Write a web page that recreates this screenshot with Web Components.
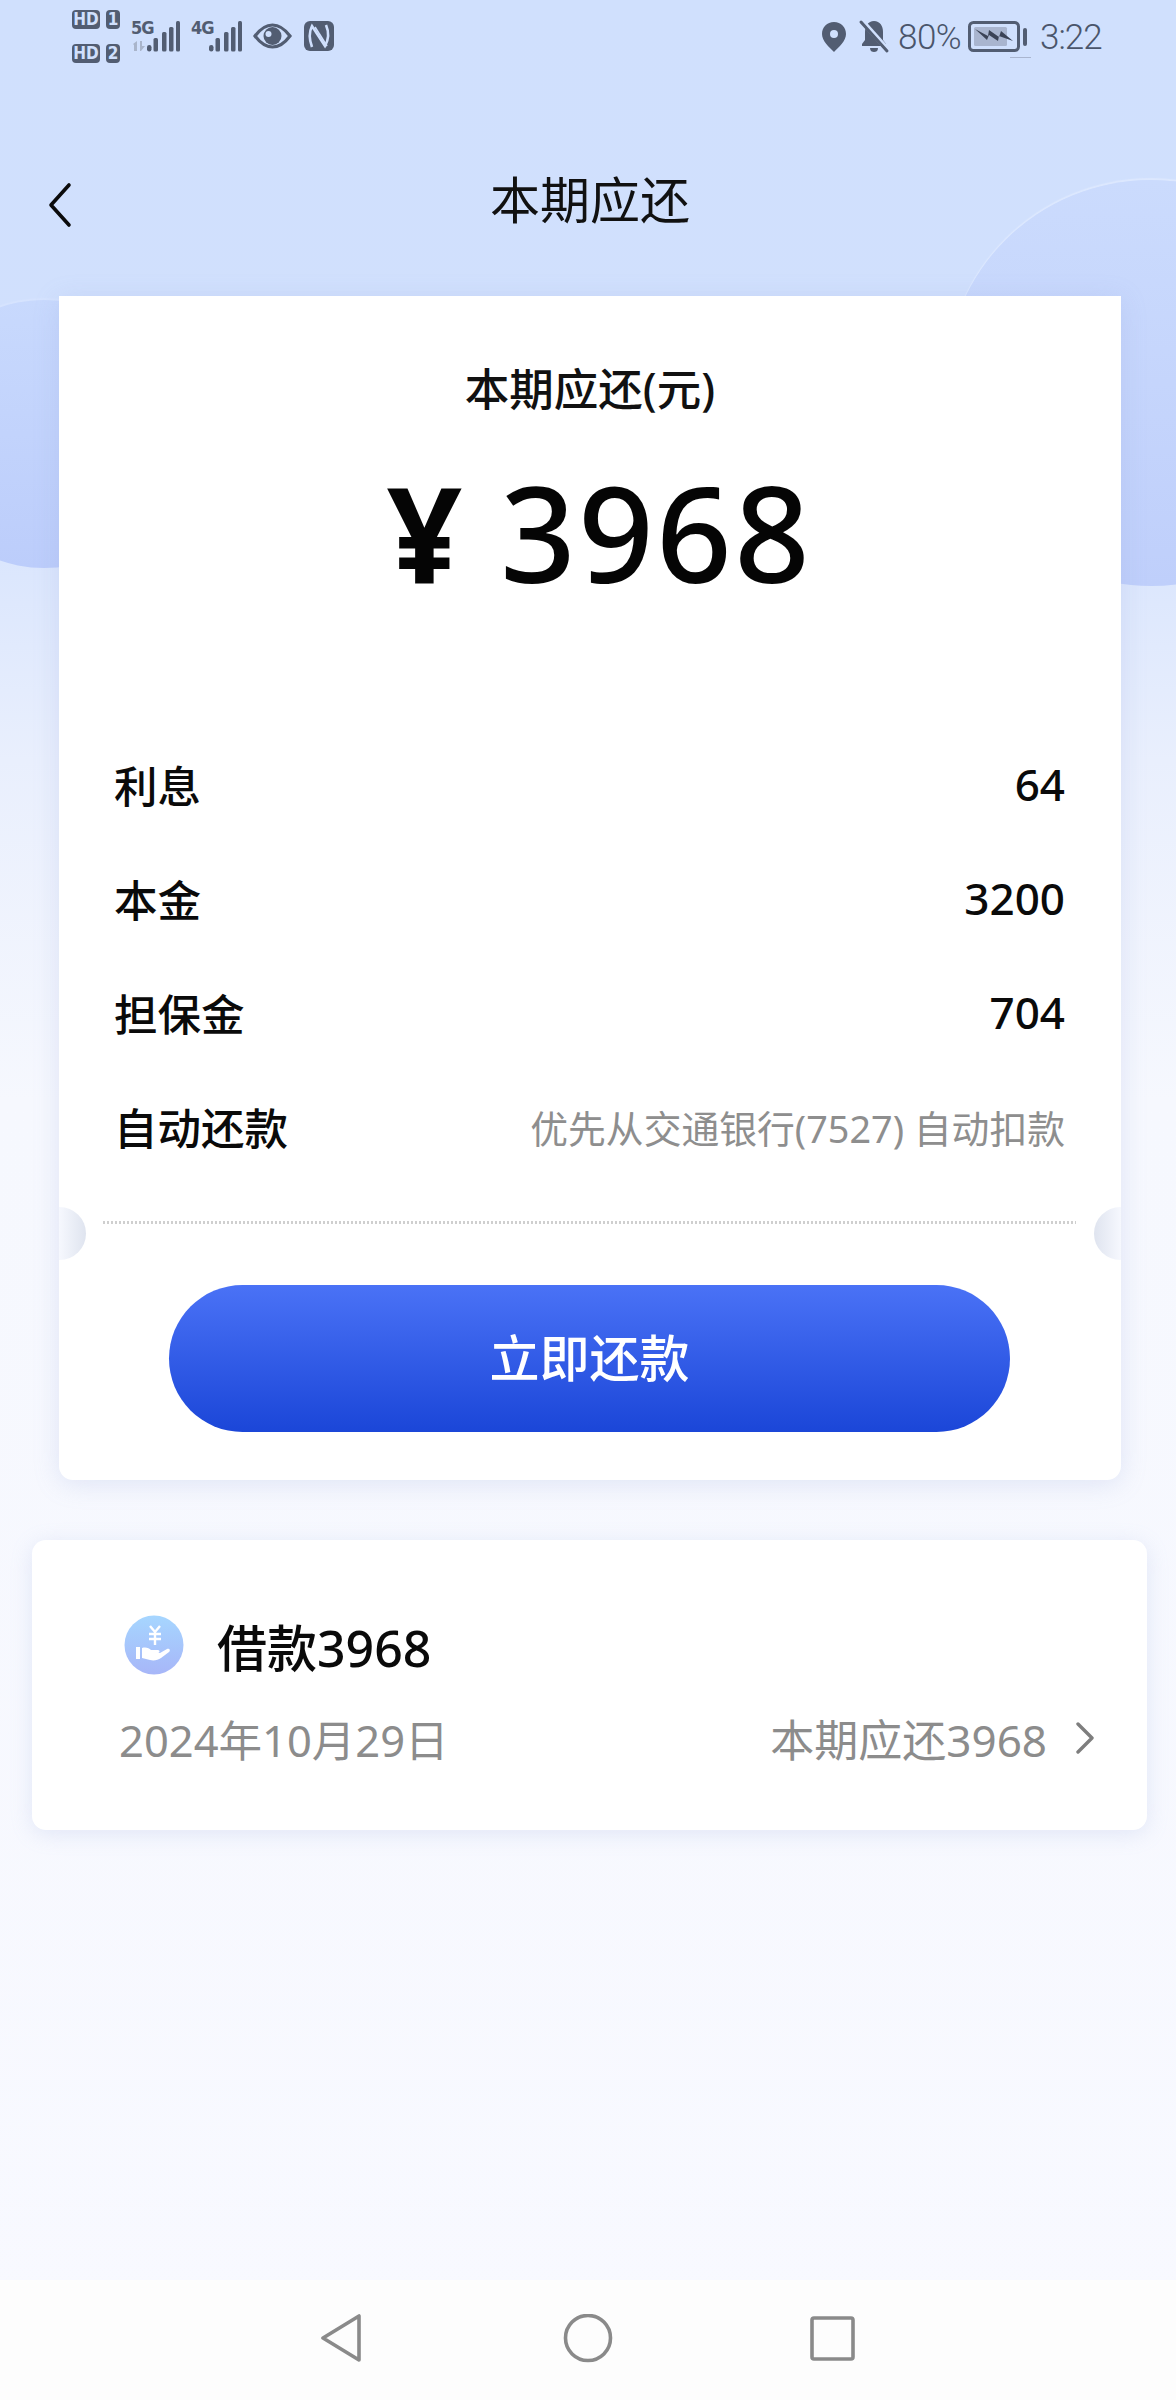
<!DOCTYPE html>
<html lang="zh">
<head>
<meta charset="utf-8">
<title>本期应还</title>
<style>
  html, body { margin: 0; padding: 0; }
  body {
    font-family: "Noto Sans", "Noto Sans CJK SC", sans-serif;
    background: #f8f9ff;
  }
</style>
</head>
<body>
<repay-screen>
  <status-bar></status-bar>
  <nav-header>本期应还</nav-header>
  <bill-card label="本期应还(元)" currency="¥" amount="3968" action="立即还款">
    <bill-row name="利息">64</bill-row>
    <bill-row name="本金">3200</bill-row>
    <bill-row name="担保金">704</bill-row>
    <bill-row name="自动还款" muted>优先从交通银行(7527) 自动扣款</bill-row>
  </bill-card>
  <loan-card title="借款3968" date="2024年10月29日" due="本期应还3968"></loan-card>
  <system-nav></system-nav>
</repay-screen>

<script>
class RepayScreen extends HTMLElement {
  constructor() {
    super();
    this.attachShadow({ mode: "open" });
    this.shadowRoot.innerHTML = `
    <style>
      :host {
        display: flex;
        flex-direction: column;
        position: relative;
        height: 2400px;
        overflow: hidden;
        background: linear-gradient(180deg, #d0e0fd 0, #d1e0fd 420px, #e9effd 760px, #f6f8fe 1100px, #f8f9ff 2400px);
      }
      .blob { position: absolute; border-radius: 50%; }
      .right {
        left: 946px; top: 180px; width: 410px; height: 406px;
        background: linear-gradient(180deg, #cbdbfd 0, #bfcffb 100%);
        box-shadow: 0 -2px 1px #dde8fe;
      }
      .left {
        left: -90px; top: 300px; width: 268px; height: 268px;
        background: linear-gradient(180deg, #c8d9fd 0, #bccdfb 100%);
        box-shadow: 0 -2px 1px #d6e3fe;
      }
      ::slotted(*) { position: relative; }
    </style>
    <div class="blob right"></div>
    <div class="blob left"></div>
    <slot></slot>`;
  }
}

class StatusBar extends HTMLElement {
  constructor() {
    super();
    this.attachShadow({ mode: "open" });
    this.shadowRoot.innerHTML = `
    <style>
      :host {
        display: flex;
        justify-content: space-between;
        box-sizing: border-box;
        height: 80px;
        padding: 10px 72px 0 72px;
        color: #525d72;
      }
      .group { display: flex; align-items: flex-start; }
      .sims { display: flex; flex-direction: column; gap: 15px; width: 59px; }
      .sim { display: flex; gap: 6px; }
      .tag {
        background: #525d72;
        color: #d0e0fd;
        border-radius: 4px;
        height: 19px;
        font: 700 17px/19px "DejaVu Sans Condensed", "Liberation Sans", sans-serif;
        text-align: center;
      }
      .tag.hd { width: 28px; }
      .tag.no { width: 14px; }
      .net { position: relative; width: 49px; height: 31px; margin-top: 11px; }
      .net b {
        position: absolute; left: 0; top: -2px;
        font: 700 18px/18px "DejaVu Sans Condensed", "Liberation Sans", sans-serif;
        letter-spacing: -1px;
      }
      svg { display: block; overflow: visible; }
      .text { font: 300 35px/36px Roboto, "Noto Sans", sans-serif; color: #4a556b; white-space: nowrap; margin-top: 10px; }
      .pct { width: 62px; margin-left: 9px; letter-spacing: -.5px; }
      .time { width: 64px; margin-left: 12px; letter-spacing: -1px; }
    </style>
    <div class="group">
      <div class="sims">
        <div class="sim"><span class="tag hd">HD</span><span class="tag no">1</span></div>
        <div class="sim"><span class="tag hd">HD</span><span class="tag no">2</span></div>
      </div>
      <div class="net">
        <b>5G</b>
        <svg width="49" height="31" viewBox="0 0 49 31" fill="#525d72">
          <path d="M2 23l4-3v10h-3v-6zM9 20h2v5l3 0-4 5h-1z" fill="#a9b5cb"/>
          <rect x="16" y="24" width="4.500" height="6.500" rx="2.200"/>
          <rect x="22.500" y="17" width="4.500" height="13.500" rx="1.500"/>
          <rect x="31" y="11" width="4.500" height="19.500" rx="1.500"/>
          <rect x="38" y="6" width="4.500" height="24.500" rx="1.500"/>
          <rect x="45" y="0" width="4" height="30.500" rx="1.500"/>
        </svg>
      </div>
      <div class="net" style="width:50px;margin-left:11px">
        <b>4G</b>
        <svg width="50" height="31" viewBox="0 0 50 31" fill="#525d72">
          <rect x="18" y="24" width="4.500" height="6.500" rx="2.200"/>
          <rect x="24.500" y="17" width="4.500" height="13.500" rx="1.500"/>
          <rect x="33" y="11" width="4.500" height="19.500" rx="1.500"/>
          <rect x="40" y="6" width="4.500" height="24.500" rx="1.500"/>
          <rect x="47" y="0" width="4" height="30.500" rx="1.500"/>
        </svg>
      </div>
      <svg style="margin:13px 0 0 12px" width="39" height="26" viewBox="0 0 39 26">
        <path d="M2 13C8 5 13 2 19.500 2S31 5 37 13C31 21 26 24 19.500 24S8 21 2 13Z" fill="none" stroke="#525d72" stroke-width="3.200"/>
        <circle cx="19.500" cy="13" r="9" fill="#525d72"/>
        <circle cx="15.500" cy="11" r="3" fill="#d0e0fd"/>
      </svg>
      <svg style="margin:11px 0 0 12px" width="30" height="30" viewBox="0 0 30 30">
        <rect width="30" height="30" rx="6" fill="#525d72"/>
        <path d="M8 26C5 18 5 11 8 5L21 25C25 18 25 11 22 4" fill="none" stroke="#d0e0fd" stroke-width="2.600"/>
        <path d="M11 6L23 25" fill="none" stroke="#d0e0fd" stroke-width="1.600"/>
      </svg>
    </div>
    <div class="group">
      <svg style="margin-top:11px" width="26" height="32" viewBox="0 0 26 32">
        <path d="M13 1C6 1 1 6 1 13c0 7 7 13 12 18 5-5 12-11 12-18C25 6 20 1 13 1Z" fill="#525d72"/>
        <circle cx="13" cy="13" r="4" fill="#d0e0fd"/>
      </svg>
      <svg style="margin:10px 0 0 12px" width="30" height="33" viewBox="0 0 30 33">
        <path d="M15 1c6 0 9 5 9 11v8l3 4v2H3v-2l3-4v-8c0-6 3-11 9-11Z" fill="#525d72"/>
        <path d="M11 28h8c0 3-2 4-4 4s-4-1-4-4Z" fill="#525d72"/>
        <path d="M3 1l26 29" stroke="#d0e0fd" stroke-width="5"/>
        <path d="M2 2l26 29" stroke="#525d72" stroke-width="3" stroke-linecap="round"/>
      </svg>
      <span class="text pct">80%</span>
      <svg style="margin:11px 0 0 8px" width="60" height="37" viewBox="0 0 60 37">
        <rect x="1.500" y="1.500" width="49" height="28" rx="4" fill="none" stroke="#525d72" stroke-width="3"/>
        <rect x="6" y="6" width="33" height="19" rx="1.500" fill="#a9b5cf"/>
        <path d="M7 8L20 15L21 9L31 16L33 10L45 20L31 15L30 20L21 14L19 19Z" fill="#3b4356"/>
        <rect x="55" y="7" width="4" height="18" rx="2" fill="#525d72"/>
        <rect x="42" y="36" width="21" height="1" fill="#a9b5cf"/>
      </svg>
      <span class="text time">3:22</span>
    </div>`;
  }
}

class NavHeader extends HTMLElement {
  constructor() {
    super();
    this.attachShadow({ mode: "open" });
    this.shadowRoot.innerHTML = `
    <style>
      :host {
        display: grid;
        grid-template-columns: 132px 1fr 132px;
        align-items: center;
        height: 216px;
        box-sizing: border-box;
        padding: 80px 0 56px 0;
        color: #111;
      }
      svg { display: block; margin: 9px 0 0 48px; }
      .title { text-align: center; font-size: 50px; line-height: 80px; padding-left: 4px; }
    </style>
    <svg width="26" height="46" viewBox="0 0 26 46">
      <path d="M21 3L3 23l18 20" fill="none" stroke="#0b0b0b" stroke-width="3.600" stroke-linecap="round" stroke-linejoin="round"/>
    </svg>
    <div class="title"><slot></slot></div>
    <div></div>`;
  }
}

class BillRow extends HTMLElement {
  constructor() {
    super();
    this.attachShadow({ mode: "open" });
    this.shadowRoot.innerHTML = `
    <style>
      :host {
        display: flex;
        justify-content: space-between;
        align-items: center;
        height: 114px;
        margin-left: -1px;
        font-size: 43.500px;
        font-weight: 500;
        color: #0a0a0a;
      }
      .value { font-size: 44px; }
      :host([muted]) .value { font-size: 37.800px; font-weight: 400; color: #8e8e8e; }
    </style>
    <span class="name"></span>
    <span class="value"><slot></slot></span>`;
    this.shadowRoot.querySelector(".name").textContent = this.getAttribute("name");
  }
}

class BillCard extends HTMLElement {
  constructor() {
    super();
    this.attachShadow({ mode: "open" });
    this.shadowRoot.innerHTML = `
    <style>
      :host {
        display: block;
        position: relative;
        box-sizing: border-box;
        height: 1184px;
        margin: 0 55px 0 59px;
        padding-top: 63px;
        background: #fff;
        border-radius: 0 0 14px 14px;
        box-shadow: 0 4px 26px rgba(140, 160, 215, .22);
        text-align: center;
      }
      .label { font-size: 44.500px; line-height: 60px; font-weight: 500; color: #111; }
      .amount { font-size: 132px; line-height: 170px; font-weight: 500; color: #050505; margin-top: 28px; letter-spacing: 2.500px; padding-left: 19px; }
      .currency { font-weight: 700; margin-right: 38px; letter-spacing: 0; }
      .rows { margin: 110px 56px 0 56px; text-align: left; }
      .dash {
        margin: 38px 45px 0 44px;
        height: 3px;
        background: repeating-linear-gradient(90deg, #cfcfcf 0 2px, transparent 2px 4px);
      }
      .pay {
        display: block;
        box-sizing: border-box;
        width: 841px;
        height: 147px;
        margin: 61px auto 0 110px;
        border-radius: 74px;
        background: linear-gradient(180deg, #4a72f6 0, #1b46d8 100%);
        color: #fff;
        font-size: 50px;
        font-weight: 500;
        line-height: 147px;
        text-align: center;
      }
      .notch {
        position: absolute;
        top: 911px;
        width: 27px;
        height: 53px;
      }
      .notch.l { left: 0; border-radius: 0 27px 27px 0; background: linear-gradient(90deg, #f6f8fe, #dfe4ef); }
      .notch.r { right: 0; border-radius: 27px 0 0 27px; background: linear-gradient(270deg, #f6f8fe, #dfe4ef); }
    </style>
    <div class="label"></div>
    <div class="amount"><span class="currency"></span><span class="digits"></span></div>
    <div class="rows"><slot></slot></div>
    <div class="dash"></div>
    <div class="pay"></div>
    <div class="notch l"></div>
    <div class="notch r"></div>`;
    this.shadowRoot.querySelector(".label").textContent = this.getAttribute("label");
    this.shadowRoot.querySelector(".currency").textContent = this.getAttribute("currency");
    this.shadowRoot.querySelector(".digits").textContent = this.getAttribute("amount");
    this.shadowRoot.querySelector(".pay").textContent = this.getAttribute("action");
  }
}

class LoanCard extends HTMLElement {
  constructor() {
    super();
    this.attachShadow({ mode: "open" });
    this.shadowRoot.innerHTML = `
    <style>
      :host {
        display: block;
        box-sizing: border-box;
        height: 290px;
        margin: 60px 29px 0 32px;
        padding: 70px 52px 0 87px;
        background: #fff;
        border-radius: 14px;
        box-shadow: 0 4px 22px rgba(140, 160, 215, .2);
      }
      .top { display: flex; align-items: center; height: 70px; gap: 33px; padding-left: 5px; }
      .title { font-size: 50px; font-weight: 500; color: #0a0a0a; }
      .bottom { display: flex; justify-content: space-between; align-items: center; margin-top: 26px; font-size: 44px; color: #8c8c8c; }
      .date { font-size: 43.500px; }
      .due { display: flex; align-items: center; gap: 28px; }
      svg { display: block; }
    </style>
    <div class="top">
      <svg width="60" height="60" viewBox="0 0 60 60">
        <defs><linearGradient id="g" x1="0" y1="0" x2="0" y2="1">
          <stop offset="0" stop-color="#a6d6ff"/><stop offset="1" stop-color="#a7b6f8"/>
        </linearGradient></defs>
        <circle cx="30" cy="30" r="29.500" fill="url(#g)"/>
        <path d="M26 11l5 6 5-6M25 19h12M25 24h12M31 17v13" fill="none" stroke="#fff" stroke-width="2.400"/>
        <path d="M12 32h4v12h-4zM18 33c4-1 7 0 9 2h7c2 0 2 3 0 3h-6 8l7-4c2-1 4 1 2 3l-8 6c-3 2-7 3-11 2l-8-2Z" fill="#fff"/>
      </svg>
      <span class="title"></span>
    </div>
    <div class="bottom">
      <span class="date"></span>
      <span class="due">
        <span class="due-text"></span>
        <svg width="20" height="32" viewBox="0 0 20 32">
          <path d="M3 2l14 14L3 30" fill="none" stroke="#7e7e7e" stroke-width="3.400" stroke-linecap="round" stroke-linejoin="round"/>
        </svg>
      </span>
    </div>`;
    this.shadowRoot.querySelector(".title").textContent = this.getAttribute("title");
    this.shadowRoot.querySelector(".date").textContent = this.getAttribute("date");
    this.shadowRoot.querySelector(".due-text").textContent = this.getAttribute("due");
  }
}

class SystemNav extends HTMLElement {
  constructor() {
    super();
    this.attachShadow({ mode: "open" });
    this.shadowRoot.innerHTML = `
    <style>
      :host {
        display: flex;
        align-items: flex-start;
        margin-top: auto;
        height: 120px;
        box-sizing: border-box;
        padding: 34px 0 0 320px;
        background: #fdfdfd;
      }
      svg { display: block; fill: none; stroke: #8a8a8a; stroke-width: 3.600; stroke-linejoin: round; }
    </style>
    <svg width="42" height="48" viewBox="0 0 42 48"><path d="M3 24L39 2v44Z"/></svg>
    <svg style="margin-left:201px" width="50" height="50" viewBox="0 0 50 50"><circle cx="25" cy="24" r="22.500"/></svg>
    <svg style="margin:2px 0 0 197px" width="46" height="46" viewBox="0 0 46 46"><rect x="2" y="2" width="41" height="41" rx="2"/></svg>`;
  }
}

customElements.define("repay-screen", RepayScreen);
customElements.define("status-bar", StatusBar);
customElements.define("nav-header", NavHeader);
customElements.define("bill-row", BillRow);
customElements.define("bill-card", BillCard);
customElements.define("loan-card", LoanCard);
customElements.define("system-nav", SystemNav);
</script>
</body>
</html>
